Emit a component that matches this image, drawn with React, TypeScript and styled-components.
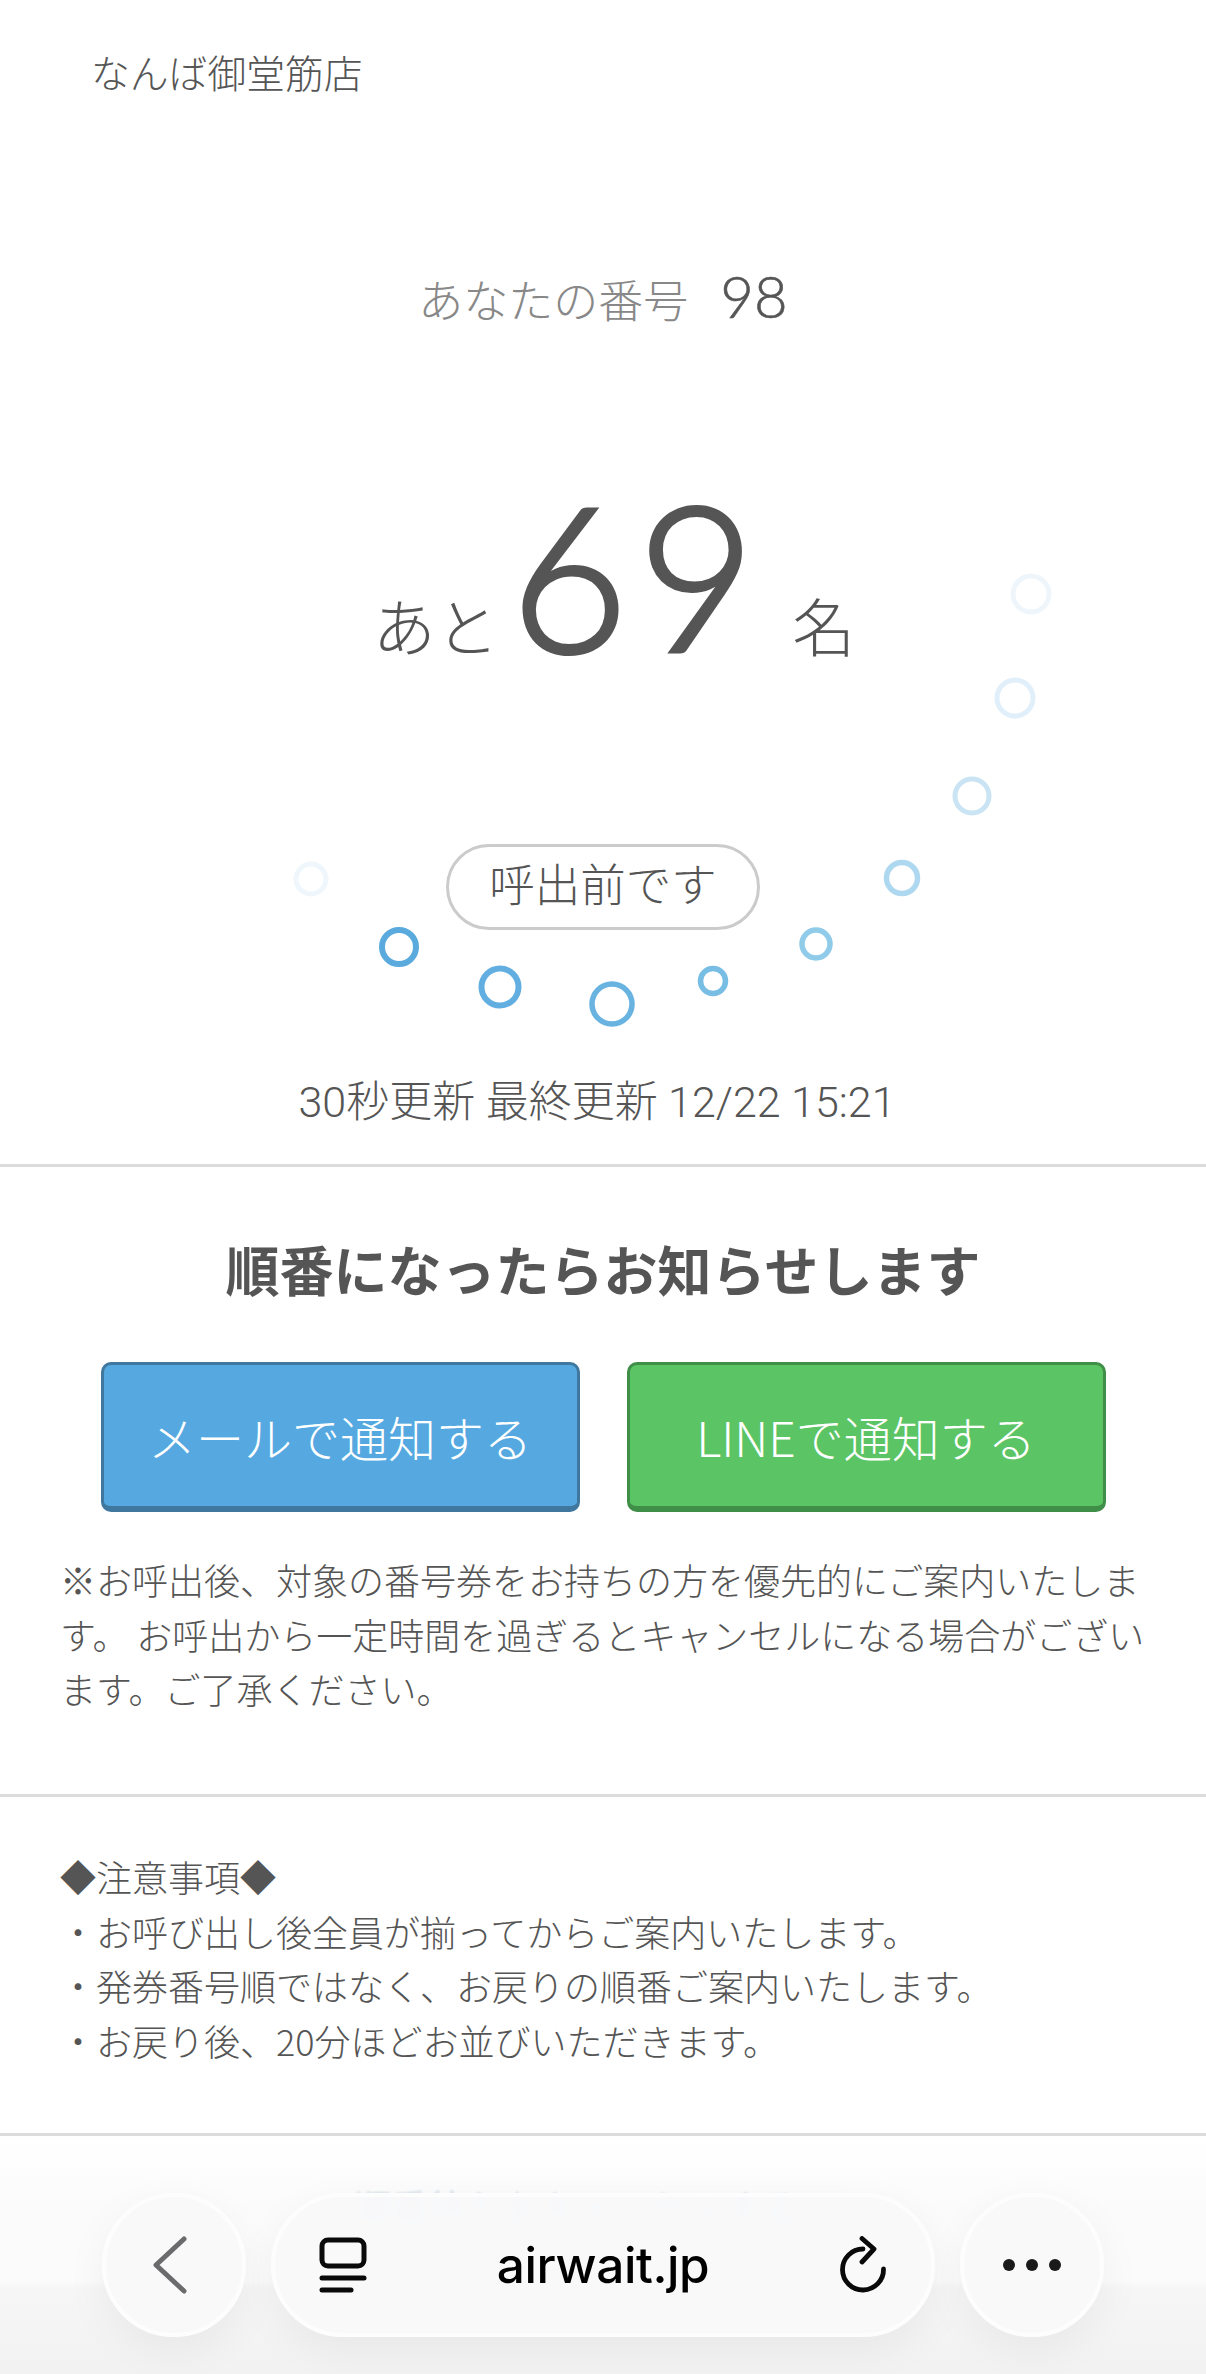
import React from "react";
import styled, { createGlobalStyle } from "styled-components";

const Global = createGlobalStyle`
  html, body { margin: 0; padding: 0; background: #fff; }
  body { font-family: "Noto Sans CJK JP", "Noto Sans", sans-serif; color: #555; }
  * { box-sizing: border-box; }
`;

const Page = styled.div`
  position: relative;
  width: 1206px;
  height: 2374px;
  overflow: hidden;
  background: #fff;
`;

const Hero = styled.section`
  position: relative;
  height: 1167px;
  display: flex;
  flex-direction: column;
  align-items: center;
  border-bottom: 3px solid #dcdcdc;
`;

const ShopName = styled.div`
  align-self: flex-start;
  margin: 44px 0 0 91px;
  font-size: 38.8px;
  line-height: 54px;
  font-weight: 300;
  color: #555;
`;

const TicketRow = styled.div`
  display: flex;
  align-items: baseline;
  margin-top: 163px;
  height: 76px;
`;

const TicketLabel = styled.span`
  font-size: 45px;
  font-weight: 300;
  color: #888;
`;

const TicketNumber = styled.span`
  margin-left: 32px;
  font-family: "Lato", sans-serif;
  font-size: 58px;
  font-weight: 300;
  -webkit-text-stroke: 0.6px #555;
  color: #555;
`;

const RemainRow = styled.div`
  margin: 112px 0 0 22px;
  height: 250px;
  line-height: 250px;
  white-space: nowrap;
`;

const RemainUnit = styled.span`
  font-size: 63px;
  font-weight: 300;
  color: #555;
  vertical-align: 1px;
`;

const RemainNumber = styled.span`
  margin: 0 27px 0 12px;
  font-family: "Lato", sans-serif;
  font-size: 202px;
  font-weight: 300;
  letter-spacing: 10px;
  -webkit-text-stroke: 4px #555;
  color: #555;
`;

const StatusPill = styled.div`
  width: 314px;
  height: 86px;
  margin-top: 145px;
  border: 3px solid #cbcbcb;
  border-radius: 43px;
  background: #fff;
  display: flex;
  align-items: center;
  justify-content: center;
  font-size: 45.5px;
  font-weight: 300;
  color: #555;
  position: relative;
  z-index: 1;
  padding-bottom: 11px;
`;

const Updated = styled.div`
  margin: 144px 12px 0 0;
  font-size: 43px;
  line-height: 56px;
  font-weight: 300;
  color: #555;
  font-family: "Roboto", "Noto Sans CJK JP", sans-serif;
`;

const SpinnerArt = styled.svg`
  position: absolute;
  left: 0;
  top: 0;
`;

const NotifySection = styled.section`
  height: 630px;
  padding: 63px 60px 0;
  border-bottom: 3px solid #dcdcdc;
`;

const NotifyTitle = styled.h2`
  margin: 0;
  text-align: center;
  font-size: 54px;
  line-height: 78px;
  font-weight: 700;
  color: #555;
`;

const ButtonRow = styled.div`
  display: flex;
  justify-content: center;
  gap: 47px;
  margin-top: 54px;
`;

const NotifyButton = styled.button<{ $bg: string; $edge: string }>`
  width: 479px;
  height: 150px;
  border: 3px solid ${(p) => p.$edge};
  border-bottom-width: 6px;
  border-radius: 10px;
  background: ${(p) => p.$bg};
  color: #fff;
  font-family: "Noto Sans CJK JP", sans-serif;
  font-size: 48px;
  font-weight: 300;
  padding: 0;
`;

const Caution = styled.p`
  margin: 40px 0 0;
  width: 1090px;
  font-size: 36px;
  line-height: 54.5px;
  font-weight: 300;
  color: #555;
`;

const NoticeSection = styled.section`
  height: 339px;
  padding: 52px 60px 0;
  border-bottom: 3px solid #dcdcdc;
`;

const NoticeLine = styled.div`
  font-size: 36px;
  line-height: 54.5px;
  font-weight: 300;
  color: #555;
`;

const HiddenCopy = styled.div`
  position: relative;
  padding: 45px 0 0 354px;
  font-size: 37px;
  line-height: 50px;
  color: #a9bdcc;
  filter: blur(1px);
  opacity: 0.45;
`;

const Fog = styled.div`
  position: absolute;
  left: 0;
  right: 0;
  bottom: 0;
  height: 237px;
  background: linear-gradient(
    to bottom,
    #ffffff 0,
    #fbfbfb 70px,
    #fbfbfb 144px,
    #f6f6f6 152px,
    #f2f2f2 237px
  );
`;

const Toolbar = styled.nav`
  position: absolute;
  left: 102px;
  bottom: 37px;
  display: flex;
  gap: 25px;
`;

const RoundButton = styled.div`
  width: 144px;
  height: 144px;
  border-radius: 72px;
  background: rgba(249, 249, 250, 0.94);
  border: 4px solid #fdfdfd;
  box-shadow: 0 14px 44px rgba(0, 0, 0, 0.05);
  backdrop-filter: blur(5px);
  display: flex;
  align-items: center;
  justify-content: center;
`;

const BackIcon = styled.svg`
  margin-right: 9px;
`;

const AddressBar = styled.div`
  width: 664px;
  height: 144px;
  border-radius: 72px;
  background: rgba(249, 249, 250, 0.94);
  border: 4px solid #fdfdfd;
  box-shadow: 0 14px 44px rgba(0, 0, 0, 0.05);
  backdrop-filter: blur(5px);
  display: flex;
  align-items: center;
  justify-content: space-between;
  padding: 0 44px;
`;

const Url = styled.span`
  font-family: "Inter", "Liberation Sans", sans-serif;
  font-size: 49.5px;
  font-weight: 500;
  color: #000;
  letter-spacing: -0.4px;
`;

const rings = [
  { x: 1031, y: 594, r: 18, w: 5, c: "#eef6fc" },
  { x: 1015, y: 698, r: 18, w: 5, c: "#e0eff9" },
  { x: 972, y: 796, r: 17, w: 5, c: "#cbe4f4" },
  { x: 902, y: 878, r: 15.5, w: 5.5, c: "#aed8f0" },
  { x: 816, y: 944, r: 14, w: 5.5, c: "#90cbea" },
  { x: 713, y: 981, r: 12.5, w: 5.5, c: "#78bde4" },
  { x: 612, y: 1004, r: 20, w: 5.5, c: "#68b3e0" },
  { x: 500, y: 987, r: 18.5, w: 6, c: "#62aee0" },
  { x: 399, y: 947, r: 17, w: 6, c: "#5baade" },
  { x: 311, y: 879, r: 15, w: 5, c: "#f0f7fc" },
];

function Spinner() {
  return (
    <SpinnerArt width="1206" height="1166" viewBox="0 0 1206 1166" fill="none">
      {rings.map((o) => (
        <circle key={o.x} cx={o.x} cy={o.y} r={o.r} stroke={o.c} strokeWidth={o.w} />
      ))}
    </SpinnerArt>
  );
}

export default function App() {
  return (
    <Page>
      <Global />
      <Hero>
        <Spinner />
        <ShopName>なんば御堂筋店</ShopName>
        <TicketRow>
          <TicketLabel>あなたの番号</TicketLabel>
          <TicketNumber>98</TicketNumber>
        </TicketRow>
        <RemainRow>
          <RemainUnit>あと</RemainUnit>
          <RemainNumber>69</RemainNumber>
          <RemainUnit>名</RemainUnit>
        </RemainRow>
        <StatusPill>呼出前です</StatusPill>
        <Updated>30秒更新 最終更新 12/22 15:21</Updated>
      </Hero>
      <NotifySection>
        <NotifyTitle>順番になったらお知らせします</NotifyTitle>
        <ButtonRow>
          <NotifyButton $bg="#55a9e0" $edge="#3f779f">メールで通知する</NotifyButton>
          <NotifyButton $bg="#5bc465" $edge="#3f8f49">LINEで通知する</NotifyButton>
        </ButtonRow>
        <Caution>
          ※お呼出後、対象の番号券をお持ちの方を優先的にご案内いたします。 お呼出から一定時間を過ぎるとキャンセルになる場合がございます。ご了承ください。
        </Caution>
      </NotifySection>
      <NoticeSection>
        <NoticeLine>◆注意事項◆</NoticeLine>
        <NoticeLine>・お呼び出し後全員が揃ってからご案内いたします。</NoticeLine>
        <NoticeLine>・発券番号順ではなく、お戻りの順番ご案内いたします。</NoticeLine>
        <NoticeLine>・お戻り後、20分ほどお並びいただきます。</NoticeLine>
      </NoticeSection>
      <Fog />
      <HiddenCopy>順番待ちをキャンセルする</HiddenCopy>
      <Toolbar>
        <RoundButton>
          <BackIcon width="36" height="58" viewBox="0 0 36 58" fill="none">
            <path d="M32 3 L4 29 L32 55" stroke="#6b6b6e" strokeWidth="5" strokeLinecap="round" strokeLinejoin="round" />
          </BackIcon>
        </RoundButton>
        <AddressBar>
          <svg width="48" height="56" viewBox="0 0 48 56" fill="none" stroke="#0a0a0a" strokeWidth="5" strokeLinecap="round">
            <rect x="3" y="3" width="42" height="26" rx="6" />
            <path d="M3 41 H45" />
            <path d="M3 53 H32" />
          </svg>
          <Url>airwait.jp</Url>
          <svg width="48" height="58" viewBox="0 0 48 58" fill="none" stroke="#0a0a0a" strokeWidth="4.8" strokeLinecap="round" strokeLinejoin="round">
            <path d="M24 13 A20.5 20.5 0 1 0 44.5 33" />
            <path d="M23 2.5 L35 13 L23 26" />
          </svg>
        </AddressBar>
        <RoundButton>
          <svg width="60" height="14" viewBox="0 0 60 14" fill="#1a1a1a">
            <circle cx="7" cy="7" r="6" />
            <circle cx="30" cy="7" r="6" />
            <circle cx="53" cy="7" r="6" />
          </svg>
        </RoundButton>
      </Toolbar>
    </Page>
  );
}
